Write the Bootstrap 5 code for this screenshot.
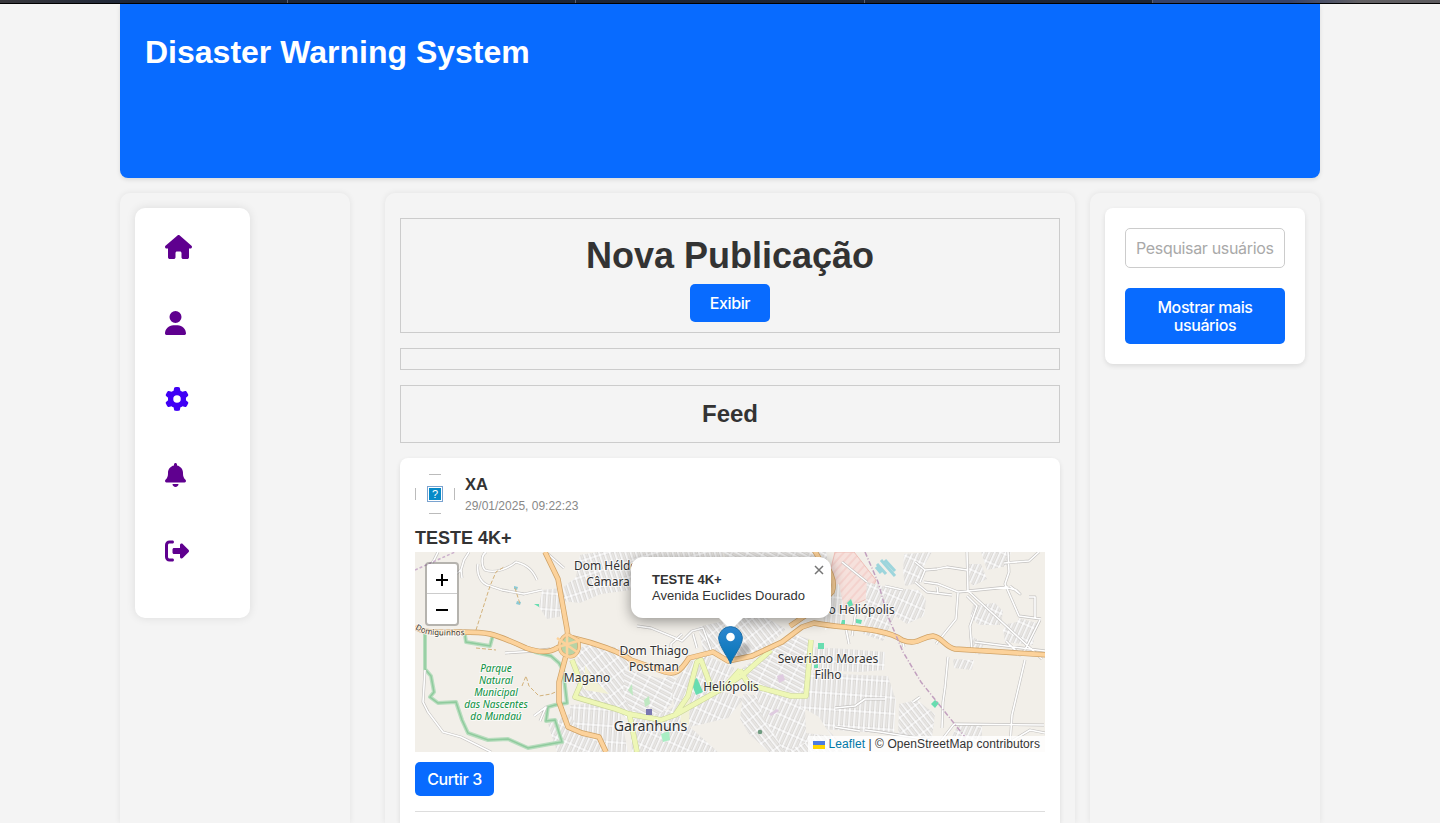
<!DOCTYPE html>
<html lang="pt-BR">
<head>
<meta charset="utf-8">
<meta name="viewport" content="width=device-width, initial-scale=1">
<title>Disaster Warning System</title>
<link href="https://cdn.jsdelivr.net/npm/bootstrap@5.3.0/dist/css/bootstrap.min.css" rel="stylesheet">
<style>
body{background:#f4f4f4;color:#333;font-family:"Liberation Sans",Arial,sans-serif;height:823px;overflow:hidden;line-height:1.2}
h1,h2,h3,p{margin:0;font-weight:700}
.tabstrip{height:4px;background:linear-gradient(90deg,#39383c 0,#1d2638 130px,#1c2536 1152px,#35426a 1152px,#35426a 1290px,#626063 1360px,#5c5a5e);border-bottom:1px solid #000}
.tabstrip i{flex:1;border-right:1px solid #5a6276}
.tabstrip i:last-child{border:0}
.wrap{width:1200px}
.hero{height:174px;background:#086bff;border-radius:0 0 8px 8px;padding:28px 25px;box-shadow:0 2px 4px rgba(0,0,0,.1)}
.hero h1{color:#fff;font-size:32px;line-height:40px}
.columns{margin-top:15px;height:630px}
.pane{border-radius:10px 10px 0 0;padding:15px 15px 0;box-shadow:0 0 6px rgba(0,0,0,.08)}
.side{width:230px}
.feed{width:690px;margin-left:35px;margin-right:15px}
.menu{width:115px;height:410px;border-radius:10px;padding:27px 30px;gap:52px;box-shadow:0 0 10px rgba(0,0,0,.1)}
.menu a{color:#609;color:#5f008f;height:24px;line-height:0}
.menu a.fresh{color:#4000f5}
.menu svg{height:24px;fill:currentColor;display:block}
.boxed{border:1px solid #ccc;margin-bottom:15px;text-align:center}
.ui,.ui.btn{font-family:Inter,sans-serif;font-size:16px;line-height:18px;letter-spacing:-.4px}
.ui.btn{background:#086bff;color:#fff;border:0;border-radius:5px;padding:10px;font-weight:500}
.post{border-radius:8px 8px 0 0;padding:15px 15px 0;height:365px;box-shadow:0 2px 5px rgba(0,0,0,.1)}
.avatar{width:40px;height:40px}
.ui.search{height:40px;border:1px solid #ccc;border-radius:5px;padding:0 10px;width:160px;color:#333;letter-spacing:-.33px}
.search::placeholder{color:#a9a9a9;opacity:1}
.finder{border-radius:8px;padding:20px;box-shadow:0 2px 5px rgba(0,0,0,.1)}
.map{height:200px;background:#f2efe9;font-size:12px}
.zoomer{left:10px;top:10px;width:34px;height:64px;border:2px solid rgba(0,0,0,.25);border-radius:4px;background-clip:padding-box}
.zoomer div{height:29px}
.zoomer div+div{border-top:1px solid #ccc;height:31px}
.bubble{left:216px;top:5px;width:200px;height:61px;border-radius:12px;padding:15px 21px;font-size:13px;line-height:16px;box-shadow:0 3px 14px rgba(0,0,0,.4)}
.bubble svg{right:7px;top:8px}
.tip{left:302px;top:65px}
.pin{left:303px;top:72px}
.credit{right:0;bottom:0;height:16px;line-height:16px;padding:0 5px;background:rgba(255,255,255,.8);white-space:nowrap;letter-spacing:.07px}
.credit a{color:#0078a8;text-decoration:none}
.roadcase{fill:none;stroke:#c4c2c0;stroke-width:2.8;stroke-linejoin:round}
.roadfill{fill:none;stroke:#fff;stroke-width:1.6;stroke-linejoin:round}
.block{fill:#e9e7e4;stroke:#cbc9c7;stroke-width:.6}
.lbl text{font-family:"Noto Sans",sans-serif;fill:#333;stroke:#fff;stroke-opacity:.65;stroke-width:2;paint-order:stroke;text-anchor:middle}
.lbl .green text{fill:#0a9142;font-size:10px;font-style:italic}
</style>
</head>
<body>
<div class="tabstrip d-flex"><i></i><i></i><i></i><i></i><i></i></div>
<div class="wrap mx-auto">
<header class="hero"><h1>Disaster Warning System</h1></header>
<div class="columns d-flex">
  <aside class="pane side">
    <nav class="menu bg-white d-flex flex-column">
      <a href="#"><svg viewBox="0 0 576 512"><path d="M575.8 255.5c0 18-15 32.1-32 32.1h-32l.7 160.2c0 2.7-.2 5.4-.5 8.1V472c0 22.1-17.9 40-40 40H392c-22.1 0-40-17.9-40-40V384c0-17.7-14.3-32-32-32H256c-17.7 0-32 14.3-32 32v88c0 22.1-17.9 40-40 40H104c-22.1 0-40-17.9-40-40V287.6H32c-18 0-32-14-32-32.1c0-9 3-17 10-24L266.4 8c7-7 15-8 22-8s15 2 21 7L564.8 231.5c8 7 12 15 11 24z"/></svg></a>
      <a href="#"><svg viewBox="0 0 448 512"><path d="M224 256A128 128 0 1 0 224 0a128 128 0 1 0 0 256zm-45.7 48C79.8 304 0 383.8 0 482.3C0 498.7 13.3 512 29.7 512H418.3c16.4 0 29.7-13.3 29.7-29.7C448 383.8 368.2 304 269.7 304H178.3z"/></svg></a>
      <a href="#" class="fresh"><svg viewBox="0 0 512 512"><path d="M495.9 166.6c3.2 8.7 .5 18.4-6.4 24.6l-43.3 39.4c1.1 8.3 1.7 16.8 1.7 25.4s-.6 17.1-1.7 25.4l43.3 39.4c6.9 6.2 9.6 15.9 6.4 24.6c-4.4 11.9-9.7 23.3-15.8 34.3l-4.7 8.1c-6.6 11-14 21.4-22.1 31.2c-5.9 7.2-15.7 9.6-24.5 6.8l-55.7-17.7c-13.4 10.3-28.2 18.9-44 25.4l-12.5 57.1c-2 9.1-9 16.3-18.2 17.8c-13.8 2.3-28 3.5-42.5 3.5s-28.7-1.2-42.5-3.5c-9.2-1.5-16.2-8.7-18.2-17.8l-12.5-57.1c-15.8-6.5-30.6-15.1-44-25.4L83.1 425.9c-8.8 2.8-18.6 .3-24.5-6.8c-8.1-9.8-15.5-20.2-22.1-31.2l-4.7-8.1c-6.1-11-11.4-22.4-15.8-34.3c-3.2-8.7-.5-18.4 6.4-24.6l43.3-39.4C64.6 273.1 64 264.6 64 256s.6-17.1 1.7-25.4L22.4 191.2c-6.9-6.2-9.6-15.9-6.4-24.6c4.4-11.9 9.7-23.3 15.8-34.3l4.7-8.1c6.6-11 14-21.4 22.1-31.2c5.9-7.2 15.7-9.6 24.5-6.8l55.7 17.7c13.4-10.3 28.2-18.9 44-25.4l12.5-57.1c2-9.1 9-16.3 18.2-17.8C227.3 1.2 241.5 0 256 0s28.7 1.2 42.5 3.5c9.2 1.5 16.2 8.7 18.2 17.8l12.5 57.1c15.8 6.5 30.6 15.1 44 25.4l55.7-17.7c8.8-2.8 18.6-.3 24.5 6.8c8.1 9.8 15.5 20.2 22.1 31.2l4.7 8.1c6.1 11 11.4 22.4 15.8 34.3zM256 336a80 80 0 1 0 0-160 80 80 0 1 0 0 160z"/></svg></a>
      <a href="#"><svg viewBox="0 0 448 512"><path d="M224 0c-17.7 0-32 14.3-32 32V51.2C119 66 64 130.6 64 208v18.800c0 47-17.3 92.400-48.500 127.600l-7.400 8.300c-8.400 9.400-10.400 22.900-5.300 34.400S19.400 416 32 416H416c12.600 0 24-7.400 29.200-18.900s3.100-25-5.300-34.400l-7.400-8.300C401.300 319.200 384 273.900 384 226.800V208c0-77.400-55-142-128-156.800V32c0-17.700-14.300-32-32-32zm45.300 493.300c12-12 18.700-28.300 18.700-45.300H160c0 17 6.700 33.300 18.700 45.300s28.300 18.700 45.300 18.700s33.300-6.700 45.300-18.700z"/></svg></a>
      <a href="#"><svg viewBox="0 0 512 512"><path d="M377.9 105.9L500.7 228.7c7.2 7.2 11.3 17.1 11.3 27.3s-4.1 20.1-11.3 27.3L377.9 406.1c-6.4 6.4-15 9.9-24 9.9c-18.7 0-33.9-15.2-33.9-33.9l0-62.1-128 0c-17.7 0-32-14.3-32-32l0-64c0-17.7 14.3-32 32-32l128 0 0-62.1c0-18.7 15.2-33.9 33.9-33.9c9 0 17.6 3.6 24 9.9zM160 96L96 96c-17.7 0-32 14.3-32 32l0 256c0 17.7 14.3 32 32 32l64 0c17.7 0 32 14.3 32 32s-14.3 32-32 32l-64 0c-53 0-96-43-96-96L0 128C0 75 43 32 96 32l64 0c17.7 0 32 14.3 32 32s-14.3 32-32 32z"/></svg></a>
    </nav>
  </aside>
  <main class="pane feed">
    <section class="boxed" style="height:115px;margin-top:10px">
      <h2 style="font-size:36px;line-height:44px;padding-top:15px;height:65px">Nova Publicação</h2>
      <button class="ui btn" style="width:80px;height:38px">Exibir</button>
    </section>
    <section class="boxed" style="height:22px"></section>
    <section class="boxed" style="height:58px"><h2 style="font-size:24px;line-height:55px">Feed</h2></section>
    <article class="post bg-white">
      <div class="d-flex">
        <svg class="avatar" viewBox="0 0 40 40" style="margin-top:1px"><g fill="none" stroke="#bbb"><path d="M14 .5H26M14 39.5H26M.5 14V26M39.5 14V26"/></g><rect x="12.5" y="12.5" width="15" height="15" fill="#fff" stroke="#7aa3d0"/><rect x="14" y="14" width="12" height="12" fill="#078ac8"/><text x="20" y="24" text-anchor="middle" font-size="11" fill="#fff">?</text></svg>
        <div style="margin-left:10px">
          <p style="font-size:16.5px;line-height:22px">XA</p>
          <div style="font-size:12px;line-height:22px;color:#888">29/01/2025, 09:22:23</div>
        </div>
      </div>
      <h3 style="font-size:18px;line-height:24px;margin-top:9px;height:26px">TESTE 4K+</h3>
      <div class="map position-relative overflow-hidden">
<svg class="d-block" width="630" height="200" viewBox="0 0 630 200">
<defs>
  <pattern id="s1" width="5" height="15" patternUnits="userSpaceOnUse" patternTransform="rotate(-18)"><rect width="5" height="15" fill="#fff"/><rect x="1" y="1" width="2.8" height="13" class="block"/></pattern>
  <pattern id="s2" width="14" height="5" patternUnits="userSpaceOnUse" patternTransform="rotate(28)"><rect width="14" height="5" fill="#fff"/><rect x="1" y="1" width="12" height="2.8" class="block"/></pattern>
  <pattern id="s3" width="5" height="16" patternUnits="userSpaceOnUse" patternTransform="rotate(4)"><rect width="5" height="16" fill="#fff"/><rect x="1" y="1" width="2.8" height="14" class="block"/></pattern>
  <pattern id="s4" width="5" height="13" patternUnits="userSpaceOnUse" patternTransform="rotate(-38)"><rect width="5" height="13" fill="#fff"/><rect x="1" y="1" width="2.8" height="11" class="block"/></pattern>
  <pattern id="s5" width="5" height="14" patternUnits="userSpaceOnUse" patternTransform="rotate(24)"><rect width="5" height="14" fill="#fff"/><rect x="1" y="1" width="2.8" height="12" class="block"/></pattern>
  <pattern id="hatch" width="6" height="6" patternUnits="userSpaceOnUse" patternTransform="rotate(42)"><rect width="6" height="6" fill="#f6e1dc"/><path d="M1 0V6" stroke="#f0bcb8" stroke-width=".8"/></pattern>
  <path id="lanes" d="M15 14l4-6 4-8M47 26l-1-8 3-10 5-8M46 18l-8 6M71 0c-6 4-4 15-1 18 10 4 24-2 31-8 12 3 17 9 21 18M63 12c-2 12 4 20 12 22l12 4 22 4 18-4M10 118l-2 32 5 10 15 20 18 5 12 6 18 9M90 101l30-2 15-2M119 164l12-9-6 14M133 2l16 14M222 74l14 2 22 9 9 4 10-10 11-3 8 22-8 8M256 101l0-9 11-10M278 82l4 14M427 10l25 20M509 30l14 2 20 8 50-5M510 18l12-1 10-2 20 3M552 0l1 40M552 38l75 69M470 34l18 4M522 35l1 7M593 0l1 20-4 12 14 32 22 3M589 35l12 3 4 4-10-8M625 68l-15 30-5 5-14-14M552 44l10 10-7 20 2 25M543 41l-2 26-20 25M614 45l6 0 0 22M560 90l70 9M533 105l-3 31-2 14-1 26M525 190l14-18 90 1M610 108l-13 55-2 30M595 190l20-12 15 3M624 0l-10 9-25 2M487 87l2 8M498 150l7-5M420 156l20-2 10-7 20 0M420 175l25 4M450 178l15 2 50 8M430 72l4 20M442 52l-5 32M500 10l10 8M505 30l5-12M500 30l12 10 25 3"/>
  <path id="avenue" d="M325 118l-15 17-50 28-14 5-32-6-16-6M260 163l13-19 9-34 4-2 12 32M204 158l-44-13 6-14-9-23M214 160l8 40M310 135l20-14 26-23M325 118l9 15 12 3 30 8 15 0 5-56"/>
  <path id="trunk" d="M130 0l13 27 9 50 2 15-10 38 0 20 9 25 14 6 17 4 7 15M0 75c10 7 25 5 46 5 26 0 30 0 65 16 22 8 30 2 47-10 22 5 48 14 58 22l34 12c10 3 15 0 24-14l24-6 15 9 24-5 30-14 20-15 12-4c30 6 70 4 88 17 16 6 18-3 31-4 9 1 12 11 22 13l110 7M375 74l28-19 14-15c4-10-2-25-12-32l-7-12"/>
</defs>
<rect width="630" height="200" fill="#f2efe9"/>
<path d="M420 0h19l22 28-7 18-18 8-16 8-8-30z" fill="url(#hatch)" stroke="#eebfb7"/>
<path d="M183 0h125v10h-92v28l-30 4-21 9-18-2-3-10 17-14 4-22z" fill="url(#s1)"/>
<path d="M308 0h104v30h-90z" fill="url(#s2)"/>
<path d="M127 38l19-2 2 28-16 3-8-12z" fill="url(#s3)"/>
<path d="M163 96l20-5 28 7 6 20 30 12 12 12-10 20-32 8-14-10-42-16z" fill="url(#s4)"/>
<path d="M155 153l30-2 20 10 8 39h-20l-14-16-16-2-8-15z" fill="url(#s3)"/>
<path d="M210 117l38 10 8-4 8 5-8 25-16 13-24-8-8-14z" fill="url(#s2)"/>
<path d="M133 172l22-10 12 22 24 5v11H142z" fill="url(#s5)"/>
<path d="M256 134l24-30 8-2 32 14-15 20-45 22z" fill="url(#s5)"/>
<path d="M283 75l60-14 28 16-22 22-24 7-36-4z" fill="url(#s4)"/>
<path d="M326 117l30-20 22-15 16 5-4 56-50-10z" fill="url(#s2)"/>
<path d="M215 168l34-8 46-24 34 10-16 20-38 9 28 25h-86z" fill="url(#s5)"/>
<path d="M328 142l60 5 2 8 30 30 10 15h-76l-20-18-9-15z" fill="url(#s4)"/>
<path d="M338 132l34 10 24 4 4 40-30 14-22-35z" fill="url(#s5)"/>
<path d="M397 121l76 3 8 25-2 33-74-5-22-26z" fill="url(#s3)"/>
<path d="M397 95l35 2 38 3-1 18-24 2-50-2z" fill="url(#s3)"/>
<path d="M390 157l14 8 12 19-25-3z" fill="#f2efe9"/>
<path d="M484 152l18-4 18 14-3 24-34-2z" fill="url(#s4)"/>
<path d="M476 36l28 2 7 10-2 16-17 8-12-8-12 25-20-7 4-52z" fill="url(#s5)"/>
<path d="M489 2l28-2-8 14-1 16-18 4-2-14zM553 12h13l6 15-14 7-6-8zM566 0h30l-4 14-20 4zM558 53l22-2 8 8-2 14h-22l-9-8zM592 72l10-2 2-4 18 5-4 22-28-3-2-12zM554 83l15 8-4 12-8-3zM538 107l21 1-2 10-18-2zM543 173h24v20h-36z" fill="url(#s5)"/>
<path d="M404 36l20-4 8 40-22 6z" fill="url(#s3)"/>
<path d="M265 150l10-6-1 28-8 5zM170 113l8 14 16 15-24-4z" fill="#f2f1d5"/>
<g fill="#68ddb0"><path d="M276 130l6-4 6 14-7 3zM403 91h6v6h-6zM432 51l4-4 2 6-4 2zM427 68l3 0v4h-4zM441 67l6 1-1 4-5-1zM516 152l4-4 4 3-4 5zM399 113l4-1v4h-4zM119 52h5v3z"/></g>
<g fill="#bfe8c2"><path d="M229 148l5-4 1 8-5 3zM213 138l4-6 1 12z"/><path d="M246 182l8-3 1 9-7 2z" fill="#a9efc4"/></g>
<g stroke="#9dd5dc" stroke-width="3"><path d="M462 12l9 10M466 8l14 16M461 15l5 6M470 8l10 11"/></g>
<path d="M99 34l4 1-1 3-3-1zM102 49l4 1-1 3-4-1z" fill="#8ccad5"/>
<path d="M354 162l8-5 2 2-8 5zM362 124l6-2 2 6-6 3z" fill="#dfcbe0"/>
<g fill="none" stroke="#b8ddbe" stroke-width="4" stroke-linejoin="round"><path id="park" d="M10 82v35l6 7 3 16-4 5 8 6 18-1 6 18 6 13 20 7 20-1 20 9 22-4 12-2-7-22-9 1 2-14 7-2 12-2-4-33-4-7-8-7-16-4-30-13-12-4-3 11-24-4-1-7"/></g>
<use href="#park" fill="none" stroke="#8fcb9d" stroke-width="1.5"/>
<use href="#lanes" class="roadcase"/><use href="#lanes" class="roadfill"/>
<path d="M0 18l40-18" stroke="#cbb0cc" fill="none" stroke-width="1.5" stroke-dasharray="3 2"/>
<path d="M61 78l14-44 6-14 8-5M100 36l5 16M61 96l20 2M107 134l4-10 3 10 10 10 12-2 9-4" fill="none" stroke="#d3b27b" stroke-dasharray="4 2"/>
<use href="#avenue" fill="none" stroke="#c9d49a" stroke-width="5.500" stroke-linejoin="round"/><use href="#avenue" fill="none" stroke="#eef7b6" stroke-width="4.400" stroke-linejoin="round"/>
<use href="#trunk" fill="none" stroke="#cfa267" stroke-width="5.400" stroke-linejoin="round"/><use href="#trunk" fill="none" stroke="#fcd29b" stroke-width="4" stroke-linejoin="round"/>
<path d="M152 82c-12 8-8 20 0 22 8 3 15-6 11-16z" fill="#b8d3a5" stroke="#cfa267" stroke-width="3.600"/><path d="M152 82c-12 8-8 20 0 22 8 3 15-6 11-16z" fill="none" stroke="#fcd29b" stroke-width="2.600"/><path d="M152 76v30M140 96l26-8M142 86l20 14" stroke="#fcd29b" stroke-width="2.600"/>
<path d="M450 0l13 30 9 32 16 38 18 30 44 55" fill="none" stroke="#c2a0bf" stroke-width="1.500" stroke-dasharray="5 2 1 2"/>
<rect x="231" y="157" width="6" height="6" fill="#7a78b0"/><circle cx="345" cy="180" r="2.300" fill="#6f9b80"/>
<g class="lbl" font-size="12">
 <text x="193" y="18">Dom Hélder</text><text x="193" y="34">Câmara</text>
 <text x="239" y="103">Dom Thiago</text><text x="239" y="119">Postman</text>
 <text x="172" y="130">Magano</text><text x="316" y="139">Heliópolis</text>
 <text x="413" y="111">Severiano Moraes</text><text x="413" y="127">Filho</text>
 <text x="440" y="62">São Heliópolis</text>
 <text x="235.500" y="179" font-size="14.200">Garanhuns</text>
 <g class="green"><text x="81" y="120">Parque</text><text x="81" y="132">Natural</text><text x="81" y="144">Municipal</text><text x="81" y="156">das Nascentes</text><text x="81" y="168">do Mundaú</text></g>
 <path id="dom" d="M0 77q10 6 22 6 12 1 30 0" fill="none"/><text font-size="8" style="text-anchor:start"><textPath href="#dom">Domiguinhos</textPath></text>
</g>
</svg>
        <div class="bubble position-absolute bg-white"><b>TESTE 4K+</b><br>Avenida Euclides Dourado
          <svg class="position-absolute" width="10" height="10"><path d="M1 1l8 8M9 1l-8 8" stroke="#757575" stroke-width="1.500"/></svg></div>
        <svg class="tip position-absolute" width="28" height="14"><path d="M1 0h26L14 13z" fill="#fff"/></svg>
        <svg class="pin position-absolute" width="45" height="42" viewBox="0 0 45 42"><defs><filter id="soft"><feGaussianBlur stdDeviation="1.600"/></filter><linearGradient id="pg" x2="0" y2="1"><stop stop-color="#2e86cf"/><stop offset="1" stop-color="#0374b5"/></linearGradient></defs><path d="M13 39l10-18q7-4 9 3 1 5-8 10z" fill="#000" opacity=".22" filter="url(#soft)"/><path d="M12.500 40C11 34 .6 22 .6 13.500a12 12.500 0 0 1 23.800 0C24.400 22 14 34 12.500 40z" fill="url(#pg)" stroke="#1c6fa8"/><circle cx="12.500" cy="13" r="4.300" fill="#fff"/></svg>
        <div class="zoomer position-absolute bg-white">
          <div class="d-flex align-items-center justify-content-center"><svg width="14" height="14"><path d="M1 8h12M7 2v12" stroke="#000" stroke-width="2"/></svg></div>
          <div class="d-flex align-items-center justify-content-center"><svg width="14" height="14"><path d="M1 8h12" stroke="#000" stroke-width="2"/></svg></div>
        </div>
        <div class="credit position-absolute"><a href="#"><svg width="12" height="8" viewBox="0 0 12 8"><path fill="#4c7be1" d="M0 0h12v4H0z"/><path fill="#ffd500" d="M0 4h12v4H0z"/></svg> Leaflet</a> | © OpenStreetMap contributors</div>
      </div>
      <button class="ui btn d-block" style="width:79px;height:34px;margin-top:10px;padding:0">Curtir 3</button>
      <div style="border-top:1px solid #ddd;margin-top:15px"></div>
    </article>
  </main>
  <aside class="pane side">
    <div class="finder bg-white">
      <input class="ui search d-block" placeholder="Pesquisar usuários...">
      <button class="ui btn w-100 d-block" style="margin-top:20px;height:56px">Mostrar mais usuários</button>
    </div>
  </aside>
</div>
</div>
<script src="https://cdn.jsdelivr.net/npm/bootstrap@5.3.0/dist/js/bootstrap.bundle.min.js"></script>
</body>
</html>
